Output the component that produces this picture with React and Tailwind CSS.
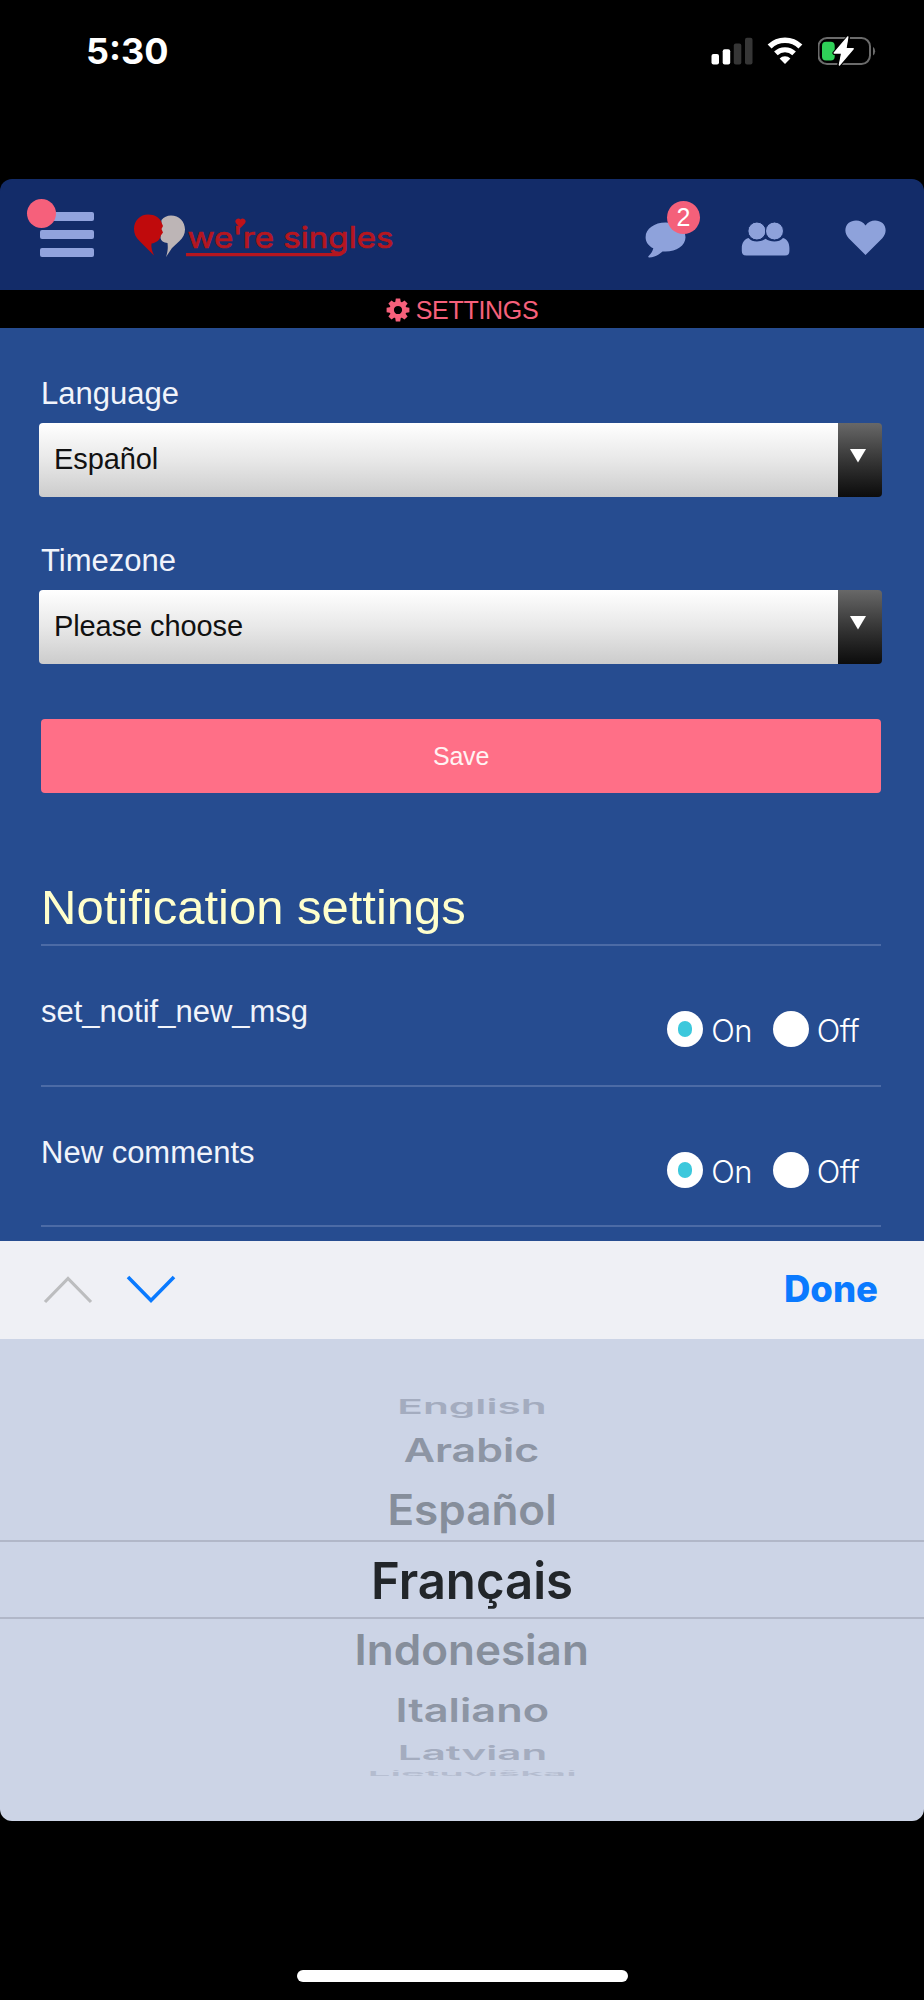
import React from "react";

function SignalIcon() {
  return (
    <svg width="42" height="28" viewBox="0 0 42 28">
      <rect x="0.5" y="17" width="7.5" height="10.5" rx="2" fill="#fff" />
      <rect x="11.7" y="12.3" width="7.5" height="15.2" rx="2" fill="#fff" />
      <rect x="22.8" y="6.5" width="7.5" height="21" rx="2" fill="#363636" />
      <rect x="34" y="0.8" width="7.5" height="26.7" rx="2" fill="#363636" />
    </svg>
  );
}

function WifiIcon() {
  return (
    <svg width="36" height="28" viewBox="0 0 36 28">
      <path d="M2.6 9.6 A22 22 0 0 1 33.4 9.6" fill="none" stroke="#fff" strokeWidth="5.6" />
      <path d="M8.9 16.4 A13.2 13.2 0 0 1 27.1 16.4" fill="none" stroke="#fff" strokeWidth="5.2" />
      <path d="M18 27 L12.6 21.4 A7.6 7.6 0 0 1 23.4 21.4 Z" fill="#fff" />
    </svg>
  );
}

function BatteryIcon() {
  return (
    <svg width="60" height="30" viewBox="0 0 60 30">
      <rect x="0.5" y="2" width="51.5" height="26" rx="8.5" fill="none" stroke="#6b6b6b" strokeWidth="2" />
      <path d="M55 10.8 A5.6 5.6 0 0 1 55 19.6 Z" fill="#6b6b6b" />
      <rect x="4" y="5.8" width="12.7" height="18.6" rx="4" fill="#2fd158" />
      <path
        d="M30 1.6 L16.4 17 H23.6 L21.2 29 L35.4 12.8 H28 Z"
        fill="#fff"
        stroke="#000"
        strokeWidth="4"
        strokeLinejoin="round"
        paintOrder="stroke"
      />
      <path d="M29.8 1 L16.2 17 H23.8 L21.4 29 L35.2 12.8 H27.8 Z" fill="#fff" stroke="#fff" strokeWidth="1.4" strokeLinejoin="round" />
    </svg>
  );
}

function StatusBar() {
  return (
    <div className="flex h-[179px] items-start justify-between pt-[33px] pr-[46px] pl-[86px]">
      <span className="font-['Inter',sans-serif] text-[36px] leading-[36px] font-bold text-white">5:30</span>
      <div className="flex items-start pt-[3px]">
        <div className="pt-px pr-[14px]"><SignalIcon /></div>
        <div className="pt-px pr-[15px]"><WifiIcon /></div>
        <BatteryIcon />
      </div>
    </div>
  );
}

function Logo() {
  return (
    <svg width="264" height="50" viewBox="132 212 264 50">
      <path d="M161.5 220 C164 217 167 215.4 171 215.4 C179 215.4 185 221.5 185 229.5 C185 234 183 238 179.5 241 L172 248 L166 257 C168 251 168 247 167.5 243 C163.5 242.6 161 241 160.5 238 Z" fill="#bdb5b6" />
      <path d="M148 214.6 C155 214.6 160 218 161.5 222.5 L163 226 L161.5 229 L163 232.5 L160.5 236 C160 240 156.5 242.8 151.5 243.5 C151 247.5 152 251 154 255.6 L139.5 241 C135.8 237.5 134 233.5 134 229 C134 220.8 140 214.6 148 214.6 Z" fill="#c00a0c" />
      <text
        x="187.5"
        y="247.5"
        textLength="206"
        lengthAdjust="spacingAndGlyphs"
        fill="#b5161f"
        stroke="#b5161f"
        strokeWidth="0.7"
        fontFamily="Inter, sans-serif"
        fontSize="29.5"
        fontWeight="400"
      >
        we're singles
      </text>
      <path d="M240.5 228 L236.2 223.4 A2.6 2.6 0 0 1 240.5 219.6 A2.6 2.6 0 0 1 244.8 223.4 Z" fill="#c01219" />
      <path d="M186 254.6 H338 Q342.5 254.6 344 250" fill="none" stroke="#b5161f" strokeWidth="3.2" />
    </svg>
  );
}

function MenuButton() {
  return (
    <div className="relative flex w-[54px] flex-col gap-[9px]">
      <div className="h-[9px] rounded-[2px] bg-[#91a3dd]" />
      <div className="h-[9px] rounded-[2px] bg-[#91a3dd]" />
      <div className="h-[9px] rounded-[2px] bg-[#91a3dd]" />
      <div className="absolute -top-[13px] -left-[13px] size-[29px] rounded-full bg-[#f6607b]" />
    </div>
  );
}

function Header() {
  return (
    <header className="flex h-[111px] items-start bg-[#132c69] pr-[37px] pl-10">
      <div className="pt-[33px]"><MenuButton /></div>
      <div className="ml-[38px] pt-[33px]"><Logo /></div>
      <div className="relative ml-auto pt-[43px]">
        <svg width="42" height="38" viewBox="0 0 42 38" fill="#8ea2db">
          <path d="M20.5 0.6 C31.5 0.6 40.5 6.8 40.5 15.2 C40.5 23.6 31.5 29.6 20.5 29.6 C19.5 29.6 18.5 29.5 17.5 29.4 C14 32.6 9 35.5 4.4 35.5 C3.2 35.5 3 34.6 3.6 34 C6 31.6 7.5 29.6 8.3 26.3 C3.6 24 0.6 20 0.6 15.2 C0.6 6.8 9.5 0.6 20.5 0.6 Z" />
        </svg>
        <div className="absolute top-[22px] left-[22px] flex size-[33px] items-center justify-center rounded-full bg-[#f4607a] font-['Liberation_Sans',sans-serif] text-[25px] leading-none text-white">2</div>
      </div>
      <div className="ml-[54px] pt-[43px]">
        <svg width="50" height="36" viewBox="0 0 50 36" fill="#8ea2db">
          <path d="M7.5 16 C11 20.5 19.5 20.5 24.6 16.8 C29.5 20.5 38.5 20.5 42 16 C46 16.8 48.4 21 48.4 26 V29 Q48.4 33.5 44 33.5 H5.4 Q0.8 33.5 0.8 29 V26 C0.8 21 3.5 16.8 7.5 16 Z" />
          <circle cx="15.9" cy="9" r="9" stroke="#132c69" strokeWidth="1" />
          <circle cx="33.5" cy="9" r="9" stroke="#132c69" strokeWidth="1" />
        </svg>
      </div>
      <div className="ml-[54px] pt-[40px]">
        <svg width="42" height="38" viewBox="0 0 42 38" fill="#8ea2db">
          <path d="M20.5 36 L3.7 19.2 C-0.9 14.4 -0.5 7.6 3.5 4 C8.5 0 17 0.6 20.5 6.6 C24.5 0.6 32.5 0 37.5 4 C41.5 7.6 41.9 14.4 37.3 19.2 Z" />
        </svg>
      </div>
    </header>
  );
}

const TEETH = [0, 45, 90, 135, 180, 225, 270, 315];

function Gear() {
  return (
    <svg width="24" height="24" viewBox="-12 -12 24 24">
      {TEETH.map((a) => (
        <path key={a} d="M-2.9 -7 L-2.2 -11.4 H2.2 L2.9 -7 Z" transform={`rotate(${a})`} fill="#f6607b" />
      ))}
      <circle r="6.3" fill="none" stroke="#f6607b" strokeWidth="4.4" />
    </svg>
  );
}

function TitleStrip() {
  return (
    <div className="flex h-[38px] items-center justify-center gap-[6px] bg-black pt-[2px] text-[#f6607b]">
      <Gear />
      <span className="text-[25px] leading-[30px] tracking-[-0.3px]">SETTINGS</span>
    </div>
  );
}

function SelectField({ label, value, className }) {
  return (
    <div className={className}>
      <div className="h-9 text-[31px] leading-9 text-[#f1f4fb]">{label}</div>
      <div className="mt-[11px] -mr-px -ml-[2px] flex h-[74px] overflow-hidden rounded-[4px]">
        <div className="flex flex-1 items-center bg-gradient-to-b from-white via-[#e8e8e8] to-[#cccccc] pb-px pl-[15px] text-[29px] leading-none tracking-[-0.1px] text-[#111]">
          {value}
        </div>
        <div className="flex w-[44px] justify-center bg-gradient-to-b from-[#686868] to-[#0c0c0c] pt-[26px] pr-[5px]">
          <svg width="16" height="14" viewBox="0 0 16 14"><path d="M0 0 H16 L8 13.5 Z" fill="#fff" /></svg>
        </div>
      </div>
    </div>
  );
}

function Radio({ checked, label }) {
  return (
    <div className="flex items-start gap-2">
      <div className="flex size-9 items-center justify-center rounded-full bg-white">
        {checked && <div className="h-4 w-[14px] rounded-[7px] bg-[#3cc8dc]" />}
      </div>
      <span className="pt-[2px] font-['Inter',sans-serif] text-[31px] leading-9 font-light tracking-[-0.6px] text-white">{label}</span>
    </div>
  );
}

function SettingRow({ label, className }) {
  return (
    <div className={`flex justify-between border-b-2 border-[#4c6ba6] ${className}`}>
      <span className="pt-12 text-[31px] leading-9 text-[#f1f4fb]">{label}</span>
      <div className="mr-[22px] flex gap-[21px] pt-[65px]">
        <Radio checked label="On" />
        <Radio label="Off" />
      </div>
    </div>
  );
}

const LANGUAGES = [
  { name: "English", row: "h-[82px]", text: "scale-x-[0.83] scale-y-[0.40] text-[#a4acbf]" },
  { name: "Arabic", row: "h-[48px]", text: "scale-x-[0.842] scale-y-[0.65] text-[#8d95a4]" },
  { name: "Español", row: "h-[63px]", text: "scale-x-[0.863] scale-y-[0.83] text-[#868e9b]" },
  { name: "Français", row: "h-[74px]", text: "scale-x-[0.963] text-[#22262a]" },
  { name: "Indonesian", row: "h-[66px]", text: "scale-x-[0.863] scale-y-[0.82] text-[#868e9b]" },
  { name: "Italiano", row: "h-[57px]", text: "scale-x-[0.85] scale-y-[0.64] text-[#8d95a4]" },
  { name: "Latvian", row: "h-[38px]", text: "scale-x-[0.825] scale-y-[0.39] text-[#a4acbf]" },
  { name: "Lietuviškai", row: "h-[16px]", text: "scale-x-[0.79] scale-y-[0.12] text-[#b4bccf]" },
];

function Picker() {
  return (
    <div className="relative h-[482px] bg-[#ccd4e6] pl-5">
      {LANGUAGES.map((l) => (
        <div key={l.name} className={`flex items-end justify-center ${l.row}`}>
          <span className={`shrink-0 origin-[50%_44px] font-['Inter',sans-serif] text-[51px] leading-[51px] font-semibold whitespace-nowrap ${l.text}`}>
            {l.name}
          </span>
        </div>
      ))}
      <div className="absolute inset-x-0 top-[201px] h-[79px] border-y-2 border-[#b1b7c8]" />
    </div>
  );
}

export default function App() {
  return (
    <div className="flex h-[2000px] w-[924px] flex-col bg-black font-['Liberation_Sans',sans-serif]">
      <StatusBar />
      <div className="overflow-hidden rounded-[12px]">
        <Header />
        <TitleStrip />
        <main className="h-[913px] bg-[#264c90] pt-12 pr-[43px] pl-[41px]">
          <SelectField label="Language" value="Español" />
          <SelectField label="Timezone" value="Please choose" className="mt-[46px]" />
          <button className="mt-[55px] flex h-[74px] w-full items-center justify-center rounded-[4px] bg-[#ff6f87] text-[25px] leading-none tracking-[-0.2px] text-[#fff3f3]">
            Save
          </button>
          <h2 className="mt-[86px] border-b-2 border-[#4c6ba6] pb-[9px] text-[49px] leading-[56px] text-[#ffffcc]">Notification settings</h2>
          <SettingRow label="set_notif_new_msg" className="h-[141px]" />
          <SettingRow label="New comments" className="h-[140px]" />
        </main>
        <div className="flex h-[98px] items-start bg-[#eff0f5] pr-[46px] pl-[43px]">
          <div className="flex gap-[33px] pt-[34px]">
            <svg width="50" height="30" viewBox="0 0 50 30"><path d="M2 27 L25 3.5 L48 27" fill="none" stroke="#bcbdbf" strokeWidth="3.2" /></svg>
            <svg width="50" height="30" viewBox="0 0 50 30"><path d="M2 2 L25 25.5 L48 2" fill="none" stroke="#0a7aff" strokeWidth="3.6" /></svg>
          </div>
          <span className="ml-auto pt-[30px] font-['Inter',sans-serif] text-[36.5px] leading-9 font-extrabold text-[#0a7aff]">Done</span>
        </div>
        <Picker />
      </div>
      <div className="mx-auto mt-auto mb-[18px] h-[12px] w-[331px] rounded-full bg-white" />
    </div>
  );
}
